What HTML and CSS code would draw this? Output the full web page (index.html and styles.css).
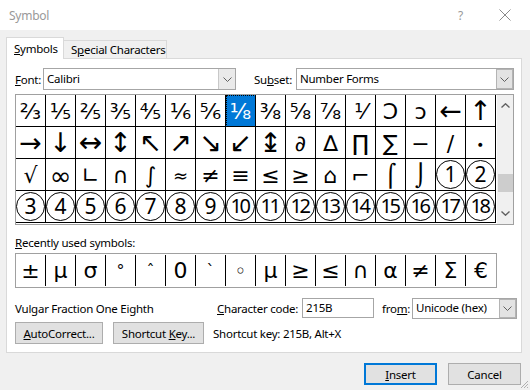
FILE: index.html
```html
<!DOCTYPE html>
<html>
<head>
<meta charset="utf-8">
<link rel="stylesheet" href="styles.css">
</head>
<body>
<div class="window">
  <div class="titlebar">
    <span class="title">Symbol</span>
    <span class="help">?</span>
    <svg class="close" width="12" height="12" viewBox="0 0 12 12"><path d="M0.5 0.5 L11.5 11.5 M11.5 0.5 L0.5 11.5" stroke="#8a8a8a" stroke-width="1" fill="none"/></svg>
  </div>
  <div class="body">
    <div class="tabs">
      <div class="tab active"><u>S</u>ymbols</div>
      <div class="tab">S<u>p</u>ecial Characters</div>
    </div>
    <div class="panel">
      <div class="row fontrow">
        <span class="lbl lbl-font"><u>F</u>ont:</span>
        <div class="combo combo-font"><span class="val">Calibri</span><span class="arrow"><svg width="9" height="5" viewBox="0 0 9 5"><path d="M0.5 0.5 L4.5 4.5 L8.5 0.5" stroke="#606060" fill="none"/></svg></span></div>
        <span class="lbl lbl-subset">Su<u>b</u>set:</span>
        <div class="combo combo-subset"><span class="val">Number Forms</span><span class="arrow dark"><svg width="9" height="5" viewBox="0 0 9 5"><path d="M0.5 0.5 L4.5 4.5 L8.5 0.5" stroke="#606060" fill="none"/></svg></span></div>
      </div>
      <div class="charmap">
        <div class="cells">
          <div class="c">⅔</div><div class="c">⅕</div><div class="c">⅖</div><div class="c">⅗</div><div class="c">⅘</div><div class="c">⅙</div><div class="c">⅚</div><div class="c sel">⅛</div><div class="c">⅜</div><div class="c">⅝</div><div class="c">⅞</div><div class="c">⅟</div><div class="c">Ↄ</div><div class="c">ↄ</div><div class="c a">←</div><div class="c a">↑</div>
          <div class="c a">→</div><div class="c a">↓</div><div class="c a wide">↔</div><div class="c a">↕</div><div class="c a">↖</div><div class="c a">↗</div><div class="c a">↘</div><div class="c a">↙</div><div class="c a">↨</div><div class="c">∂</div><div class="c">∆</div><div class="c">∏</div><div class="c">∑</div><div class="c">−</div><div class="c">∕</div><div class="c dot">∙</div>
          <div class="c">√</div><div class="c inf">∞</div><div class="c">∟</div><div class="c">∩</div><div class="c">∫</div><div class="c sm">≈</div><div class="c">≠</div><div class="c">≡</div><div class="c">≤</div><div class="c">≥</div><div class="c">⌂</div><div class="c">⌐</div><div class="c">⌠</div><div class="c">⌡</div><div class="c"><span class="circ">1</span></div><div class="c"><span class="circ">2</span></div>
          <div class="c"><span class="circ">3</span></div><div class="c"><span class="circ">4</span></div><div class="c"><span class="circ">5</span></div><div class="c"><span class="circ">6</span></div><div class="c"><span class="circ">7</span></div><div class="c"><span class="circ">8</span></div><div class="c"><span class="circ">9</span></div><div class="c"><span class="circ two">10</span></div><div class="c"><span class="circ two">11</span></div><div class="c"><span class="circ two">12</span></div><div class="c"><span class="circ two">13</span></div><div class="c"><span class="circ two">14</span></div><div class="c"><span class="circ two">15</span></div><div class="c"><span class="circ two">16</span></div><div class="c"><span class="circ two">17</span></div><div class="c"><span class="circ two">18</span></div>
        </div>
        <div class="scrollbar">
          <svg class="sb-up" width="9" height="5" viewBox="0 0 9 5"><path d="M0.5 4.5 L4.5 0.8 L8.5 4.5" stroke="#606060" stroke-width="1.4" fill="none"/></svg>
          <div class="sb-track"><div class="sb-thumb"></div></div>
          <svg class="sb-down" width="9" height="5" viewBox="0 0 9 5"><path d="M0.5 0.5 L4.5 4.2 L8.5 0.5" stroke="#606060" stroke-width="1.4" fill="none"/></svg>
        </div>
      </div>
      <div class="lbl recent-lbl"><u>R</u>ecently used symbols:</div>
      <div class="recent">
        <div class="r">±</div><div class="r">µ</div><div class="r">σ</div><div class="r sm">°</div><div class="r sm">ˆ</div><div class="r">0</div><div class="r sm">`</div><div class="r ring">◦</div><div class="r">µ</div><div class="r">≥</div><div class="r">≤</div><div class="r">∩</div><div class="r">α</div><div class="r">≠</div><div class="r">Σ</div><div class="r last">€</div>
      </div>
      <div class="row inforow">
        <span class="charname">Vulgar Fraction One Eighth</span>
        <span class="lbl"><u>C</u>haracter code:</span>
        <div class="input">215B</div>
        <span class="lbl lbl-from">fro<u>m</u>:</span>
        <div class="combo combo-from"><span class="val">Unicode (hex)</span><span class="arrow dark"><svg width="9" height="5" viewBox="0 0 9 5"><path d="M0.5 0.5 L4.5 4.5 L8.5 0.5" stroke="#606060" fill="none"/></svg></span></div>
      </div>
      <div class="row btnrow">
        <div class="btn btn-auto"><span><u>A</u>utoCorrect...</span></div>
        <div class="btn btn-short"><span>Shortcut <u>K</u>ey...</span></div>
        <span class="shortcut">Shortcut key: 215B, Alt+X</span>
      </div>
    </div>
    <div class="footer">
      <div class="btn default"><span><u>I</u>nsert</span></div>
      <div class="btn"><span>Cancel</span></div>
    </div>
  </div>
  <svg class="grip" width="10" height="10" viewBox="0 0 10 10"><path d="M9 2 L2 9 M9 5 L5 9 M9 8 L8 9" stroke="#b0b0b0" stroke-width="1" fill="none"/></svg>
</div>
</body>
</html>
```
FILE: styles.css
```css
* { box-sizing: border-box; }
html, body { margin: 0; padding: 0; }
body {
  width: 530px; height: 390px; overflow: hidden;
  background: #f0f0f0;
  font-family: "Noto Sans", "Open Sans", sans-serif;
  font-size: 11.5px; letter-spacing: -0.25px; color: #000;
}
u { text-decoration: underline; text-underline-offset: 1px; }
.window { position: relative; width: 530px; height: 390px; }
.titlebar {
  height: 30px; background: #fff;
  display: flex; align-items: center;
  padding-left: 9px;
}
.title { color: #999; font-size: 12px; flex: 1; }
.help { color: #999; font-size: 12px; margin-right: 36px; }
.close { margin-right: 19px; }
.body { padding: 7px 9px 0 6px; }
.tabs { display: flex; align-items: flex-end; height: 21px; }
.tab {
  height: 18px; padding: 0 7px; line-height: 17px;
  background: #f0f0f0; border: 1px solid #d9d9d9; border-bottom: none; border-left: none;
  width: 103px; white-space: nowrap;
}
.tab.active {
  height: 22px; width: 58px; line-height: 22px;
  background: #fff; border-left: 1px solid #d9d9d9;
  margin-bottom: -1px; position: relative; z-index: 1;
  padding: 0 7px;
}
.panel {
  background: #fff; border: 1px solid #d9d9d9;
  width: 516px; height: 295px;
  padding: 9px 0 0 8px;
}
.row { display: flex; align-items: center; }
.fontrow { height: 22px; }
.lbl { white-space: nowrap; }
.lbl-font { width: 28px; }
.lbl-subset { margin-left: 18px; width: 42px; }
.combo {
  height: 22px; border: 1px solid #a6a6a6; background: #fff;
  display: flex; align-items: stretch;
}
.combo .val { flex: 1; padding-left: 3px; line-height: 19px; }
.combo .arrow {
  width: 17px; display: flex; align-items: center; justify-content: center;
  background: #eaeaea; border-left: 1px solid #c8c8c8;
}
.combo .arrow.dark { background: #e3e3e3; border: 1px solid #b4b4b4; margin: 0; }
.combo-font { width: 193px; }
.combo-subset { width: 218px; }
.combo-from { width: 105px; height: 21px; }
.combo-from .val { line-height: 18px; }
.charmap {
  margin-top: 4px;
  width: 499px; height: 131px;
  border: 1px solid #a0a0a0;
  display: flex;
}
.cells {
  display: grid;
  grid-template-columns: repeat(16, 30px);
  grid-auto-rows: 32px;
  width: 480px;
  align-content: start;
}
.c {
  border-right: 1px solid #000; border-bottom: 1px solid #000;
  display: flex; align-items: center; justify-content: center;
  font-family: "DejaVu Sans", sans-serif; font-size: 22px; line-height: 1;
  letter-spacing: 0;
  overflow: hidden; padding-top: 2px;
}
.c.a { font-size: 27px; padding-top: 0; }
.c.a.wide { font-size: 28px; overflow: visible; }
.c.inf { font-size: 26px; }
.c.sm { font-size: 18px; }
.c.dot { font-size: 14px; }
.c.sel {
  background: #0078d7; color: #fff;
  outline: 1px dotted #000; outline-offset: -1px;
}
.circ {
  width: 29px; height: 29px; border-radius: 50%;
  border: 1.4px solid #000;
  display: flex; align-items: center; justify-content: center;
  font-family: "Noto Sans", sans-serif; font-size: 21px; line-height: 1;
  padding-bottom: 1px; margin-top: -2px;
}
.circ.two { letter-spacing: -2.5px; font-size: 20px; padding-right: 2px; }
.scrollbar {
  width: 17px; background: #f0f0f0; margin-left: 1px;
  display: flex; flex-direction: column; align-items: center;
  height: 129px;
}
.sb-up { margin-top: 8px; }
.sb-track { flex: 1; width: 100%; padding-top: 66px; }
.sb-thumb { width: 15px; height: 18px; background: #cdcdcd; margin: 0 auto; }
.sb-down { margin-bottom: 8px; }
.recent-lbl { margin-top: 10px; line-height: 16px; height: 16px; }
.recent {
  margin-top: 2px;
  width: 482px; height: 35px;
  border: 1px solid #a0a0a0;
  display: flex; padding: 1px 0;
}
.r {
  width: 30px; border-right: 1px solid #000;
  display: flex; align-items: center; justify-content: center;
  font-family: "DejaVu Sans", sans-serif; font-size: 22px; line-height: 1;
  letter-spacing: 0;
}
.r.sm { font-size: 16px; }
.r.ring { font-size: 20px; }
.r.last { border-right: none; }
.inforow { margin-top: 10px; height: 20px; }
.charname { width: 202px; white-space: nowrap; }
.input {
  margin-left: 4px; width: 72px; height: 20px;
  border: 1px solid #a6a6a6; padding-left: 3px; line-height: 18px;
}
.lbl-from { margin-left: 8px; width: 30px; }
.btnrow { margin-top: 4px; height: 22px; }
.btn {
  height: 22px; background: #e1e1e1; border: 1px solid #adadad;
  display: flex; align-items: center; justify-content: center;
  white-space: nowrap;
}
.btn-auto { width: 88px; }
.btn-short { width: 91px; margin-left: 10px; }
.shortcut { margin-left: 9px; }
.footer {
  display: flex; justify-content: flex-end; gap: 11px;
  margin-top: 10px; padding-right: 0;
}
.footer .btn { width: 73px; height: 22px; }
.btn.default { border: 2px solid #0078d7; }
.grip { position: absolute; right: 1px; bottom: 1px; }
```
